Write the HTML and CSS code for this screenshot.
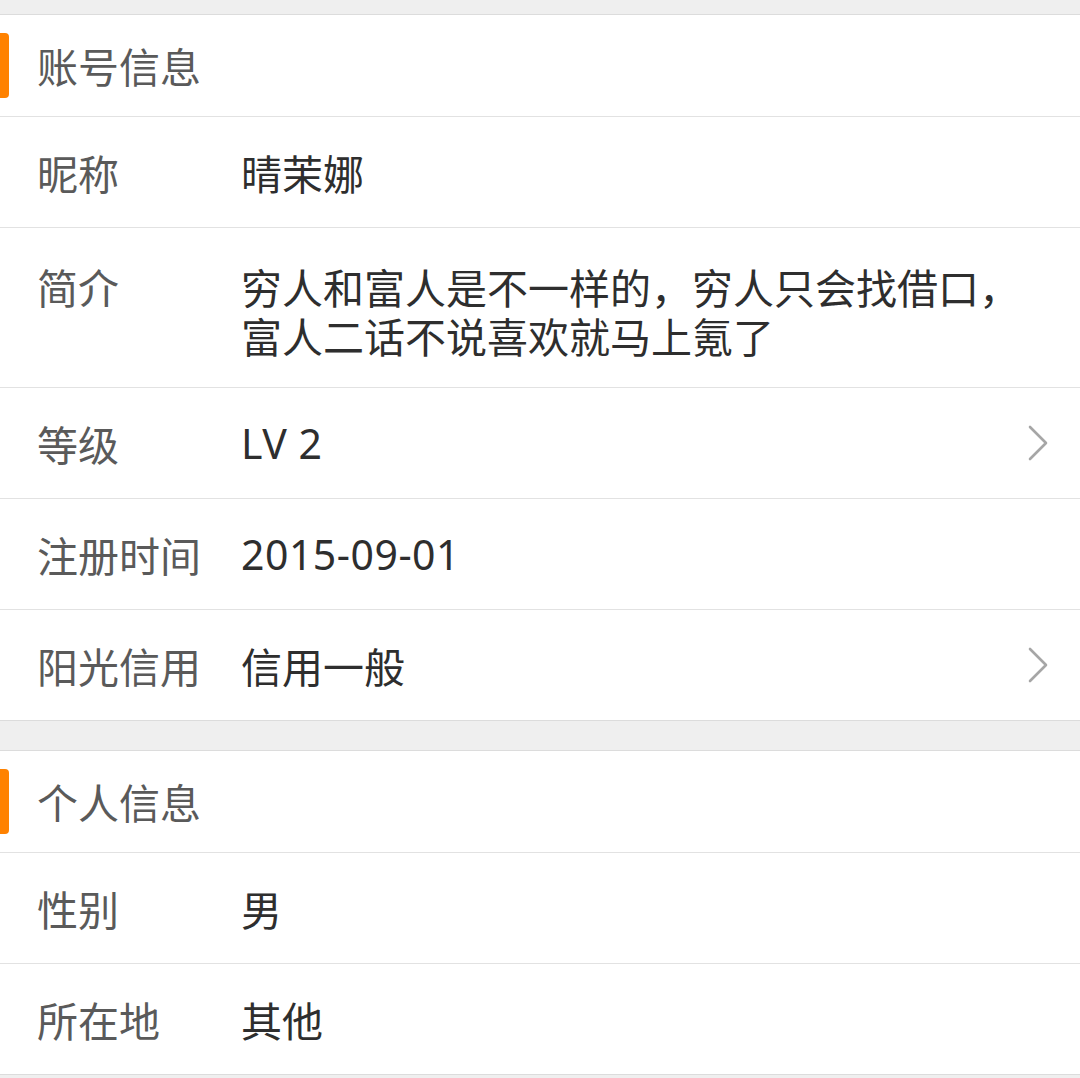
FILE: index.html
```html
<!DOCTYPE html>
<html lang="zh-CN">
<head>
<meta charset="utf-8">
<link rel="stylesheet" href="styles.css">
</head>
<body>
<div class="page">
  <div class="gap gap-top"></div>
  <section class="group">
    <div class="head"><span class="mark"></span><span class="head-text">账号信息</span></div>
    <div class="row"><span class="label">昵称</span><span class="value">晴茉娜</span></div>
    <div class="row row-multi"><span class="label">简介</span><span class="value">穷人和富人是不一样的，穷人只会找借口，富人二话不说喜欢就马上氪了</span></div>
    <div class="row"><span class="label">等级</span><span class="value latin">LV 2</span>
      <svg class="chev" viewBox="0 0 22 36" width="22" height="36"><path d="M3 2 L19 18 L3 34" fill="none" stroke="#a6a6a6" stroke-width="2.6" stroke-linecap="round" stroke-linejoin="round"/></svg>
    </div>
    <div class="row"><span class="label">注册时间</span><span class="value latin">2015-09-01</span></div>
    <div class="row"><span class="label">阳光信用</span><span class="value">信用一般</span>
      <svg class="chev" viewBox="0 0 22 36" width="22" height="36"><path d="M3 2 L19 18 L3 34" fill="none" stroke="#a6a6a6" stroke-width="2.6" stroke-linecap="round" stroke-linejoin="round"/></svg>
    </div>
  </section>
  <div class="gap gap-mid"></div>
  <section class="group">
    <div class="head"><span class="mark"></span><span class="head-text">个人信息</span></div>
    <div class="row"><span class="label">性别</span><span class="value">男</span></div>
    <div class="row"><span class="label">所在地</span><span class="value">其他</span></div>
  </section>
  <div class="gap gap-bottom"></div>
</div>
</body>
</html>
```
FILE: styles.css
```css
html, body {
  margin: 0;
  padding: 0;
  background: #f0f0f0;
}
.page {
  width: 1080px;
  font-family: "Noto Sans CJK SC", "Noto Sans", sans-serif;
  font-size: 41px;
  color: #333;
}
.gap {
  background: #efefef;
}
.gap-top { height: 14px; }
.gap-mid { height: 29px; }
.gap-bottom { height: 4px; }
.group {
  background: #fff;
  border-top: 1px solid #dcdcdc;
  border-bottom: 1px solid #dcdcdc;
}
.head {
  height: 101px;
  display: flex;
  align-items: center;
  border-bottom: 1px solid #e2e2e2;
}
.mark {
  width: 9px;
  height: 65px;
  background: #ff8200;
  border-radius: 0 4px 4px 0;
}
.head-text {
  margin-left: 28px;
  color: #5a5a5a;
  line-height: 1;
}
.row {
  height: 111px;
  box-sizing: border-box;
  display: flex;
  align-items: center;
  padding-left: 37px;
  border-bottom: 1px solid #e2e2e2;
}
.row:last-child { border-bottom: none; height: 110px; }
.label {
  width: 204px;
  flex: none;
  color: #5a5a5a;
  line-height: 49px;
}
.value {
  flex: 1;
  color: #2e2e2e;
  line-height: 49px;
}
.latin {
  font-family: "Noto Sans", "Noto Sans CJK SC", sans-serif;
  letter-spacing: 0.5px;
}
.row-multi {
  height: 160px;
  align-items: flex-start;
  padding-top: 34px;
}
.row-multi .value {
  flex: none;
  width: 790px;
}
.chev {
  flex: none;
  margin-right: 31px;
}
```
